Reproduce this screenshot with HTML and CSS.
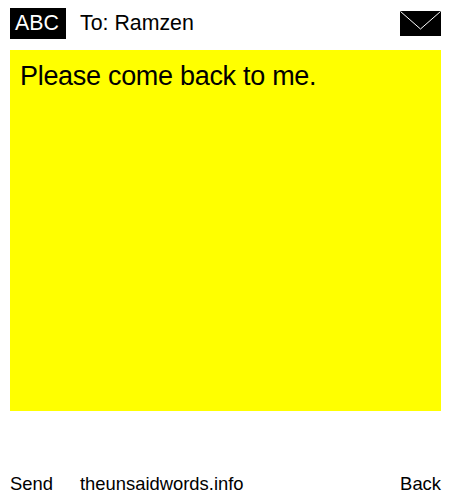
FILE: index.html
```html
<!DOCTYPE html>
<html lang="en">
<head>
<meta charset="UTF-8">
<meta name="viewport" content="width=device-width, initial-scale=1.0">
<title>The Unsaid Words</title>
<link rel="stylesheet" href="styles.css">
</head>
<body>
<div class="phone">
  <div class="top-bar">
    <span class="mode">ABC</span>
    <span class="to">To: Ramzen</span>
    <svg class="envelope" width="41" height="25" viewBox="0 0 41 25">
      <rect width="41" height="25" fill="#000"/>
      <path d="M0.5 0.5 L20.5 18 L40.5 0.5" fill="none" stroke="#fff" stroke-width="1"/>
    </svg>
  </div>
  <div class="message">Please come back to me.</div>
  <div class="bottom-bar">
    <a href="#" class="send">Send</a>
    <a href="#" class="site">theunsaidwords.info</a>
    <a href="#" class="back">Back</a>
  </div>
</div>
</body>
</html>
```

FILE: styles.css
```css
body {
  margin: 0;
  background-color: #fff;
  color: #000;
  font-family: "Liberation Sans", Arial, sans-serif;
}

.phone {
  display: flex;
  flex-direction: column;
  width: 431px;
  height: 500px;
  padding: 8px 9px 0 10px;
}

.top-bar {
  display: flex;
  align-items: center;
  height: 31px;
  font-size: 21.33px;
}

.mode {
  box-sizing: border-box;
  width: 56px;
  height: 31px;
  padding-left: 5px;
  line-height: 31px;
  background-color: #000;
  color: #fff;
}

.to {
  margin-left: 14px;
}

.envelope {
  margin-left: auto;
}

.message {
  height: 351px;
  margin-top: 11px;
  padding: 6px 10px 4px;
  background-color: #ff0;
  font-size: 27px;
  letter-spacing: -0.3px;
  line-height: 40px;
}

.bottom-bar {
  display: flex;
  margin-top: 62px;
  font-size: 18.4px;
  line-height: 22px;
}

.bottom-bar a {
  color: #000;
  text-decoration: none;
}

.site {
  margin-left: 27px;
}

.back {
  margin-left: auto;
}
```
